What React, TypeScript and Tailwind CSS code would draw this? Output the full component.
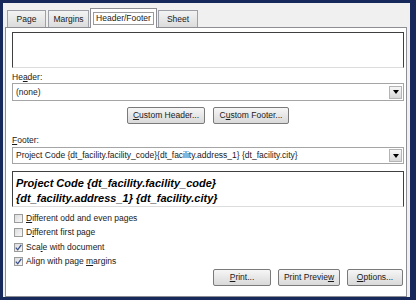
import React from "react";

const U = ({ children }: { children: React.ReactNode }) => <span className="underline">{children}</span>;

function Tab({ label, active, className = "" }: { label: string; active?: boolean; className?: string }) {
  if (active) {
    return (
      <div className={`relative z-10 -mb-px flex h-[20px] items-start justify-center border border-b-0 border-[#8c8e94] bg-white pt-[3px] ${className}`}>
        <span className="border border-[#9a9a9a] px-[2px] leading-[11px]">{label}</span>
      </div>
    );
  }
  return (
    <div className={`flex h-[17px] items-center justify-center border border-b-0 border-[#9da0a6] bg-gradient-to-b from-[#f3f3f3] to-[#dcdcdc] ${className}`}>
      {label}
    </div>
  );
}

function Dropdown({ value, height }: { value: string; height: string }) {
  return (
    <div className={`flex ${height} items-center border border-[#a5a5a5] bg-white pl-[3px] pr-[1px]`}>
      <span className="flex-1 truncate">{value}</span>
      <div className="flex h-[13px] w-[13px] items-center justify-center border border-[#b4b4b4] bg-gradient-to-b from-[#f7f7f7] to-[#d8d8d8]">
        <svg width="6" height="4" viewBox="0 0 6 4">
          <path d="M0 0h6L3 4z" fill="#000" />
        </svg>
      </div>
    </div>
  );
}

function Btn({ children, w }: { children: React.ReactNode; w: string }) {
  return (
    <div className={`flex h-[17px] ${w} items-center justify-center rounded-[2px] border border-[#7a7a7a] bg-gradient-to-b from-[#f6f6f6] to-[#d9d9d9]`}>
      {children}
    </div>
  );
}

function Check({ checked, children }: { checked?: boolean; children: React.ReactNode }) {
  return (
    <div className="flex h-[14.5px] items-center gap-[3px] pl-[2px]">
      <div className="flex h-[9px] w-[9px] items-center justify-center border border-[#9a9b9b] bg-gradient-to-br from-[#dcdcdc] to-[#f8f8f8]">
        {checked && (
          <svg width="7" height="7" viewBox="0 0 7 7">
            <path d="M0.8 3.6 L2.7 5.8 L6.3 0.8" fill="none" stroke="#3a4f8a" strokeWidth="1.3" />
          </svg>
        )}
      </div>
      <span>{children}</span>
    </div>
  );
}

export default function App() {
  return (
    <div className="h-[300px] w-[416px] bg-[#16295a] pb-[3px] pl-[3px] pr-[6px] pt-[3px] font-['Liberation_Sans',Arial,sans-serif] text-[8.5px] text-[#1a1a1a]">
      <div className="flex h-full flex-col bg-[#f0f0f0] pl-[2px] pr-[3px]">
        {/* TABS */}
        <div className="mt-[5px] flex h-[19px] items-end pl-[2px]">
          <Tab label="Page" className="w-[39px]" />
          <Tab label="Margins" className="ml-[2px] w-[41px]" />
          <Tab label="Header/Footer" active className="ml-[1px] w-[67px]" />
          <Tab label="Sheet" className="ml-[1px] w-[40px]" />
        </div>

        {/* PANEL */}
        <div className="flex flex-1 flex-col border border-[#8c8e94] bg-white pb-[2px] pl-[6px] pr-[2px] pt-[4px]">
          <div className="h-[36px] border border-b-[#dcdcdc] border-l-[#404040] border-r-[#404040] border-t-[#404040] bg-white" />

          <div className="mt-[4px] h-[11px] leading-[11px]">
            He<U>a</U>der:
          </div>
          <Dropdown value="(none)" height="h-[18px]" />

          <div className="mt-[6px] flex justify-center gap-[8px]">
            <Btn w="w-[78px]">
              <span><U>C</U>ustom Header...</span>
            </Btn>
            <Btn w="w-[76px]">
              <span>C<U>u</U>stom Footer...</span>
            </Btn>
          </div>

          <div className="mt-[11px] h-[11px] leading-[11px]">
            <U>F</U>ooter:
          </div>
          <Dropdown value="Project Code {dt_facility.facility_code}{dt_facility.address_1} {dt_facility.city}" height="mt-[1px] h-[17px]" />

          <div className="mt-[7px] h-[36px] border border-b-[#dcdcdc] border-l-[#404040] border-r-[#404040] border-t-[#404040] px-[3px] pt-[4px] text-[11px] font-bold italic leading-[15px] text-black">
            <div>Project Code {"{dt_facility.facility_code}"}</div>
            <div>{"{dt_facility.address_1} {dt_facility.city}"}</div>
          </div>

          <div className="mt-[4px] flex flex-col">
            <Check><U>D</U>ifferent odd and even pages</Check>
            <Check>D<U>i</U>fferent first page</Check>
            <Check checked>Sca<U>l</U>e with document</Check>
            <Check checked>Align with page <U>m</U>argins</Check>
          </div>

          <div className="flex justify-end gap-[7px] pr-[1px]">
            <Btn w="w-[58px]">
              <span><U>P</U>rint...</span>
            </Btn>
            <Btn w="w-[62px]">
              <span>Print Previe<U>w</U></span>
            </Btn>
            <Btn w="w-[56px]">
              <span><U>O</U>ptions...</span>
            </Btn>
          </div>
        </div>
      </div>
    </div>
  );
}
